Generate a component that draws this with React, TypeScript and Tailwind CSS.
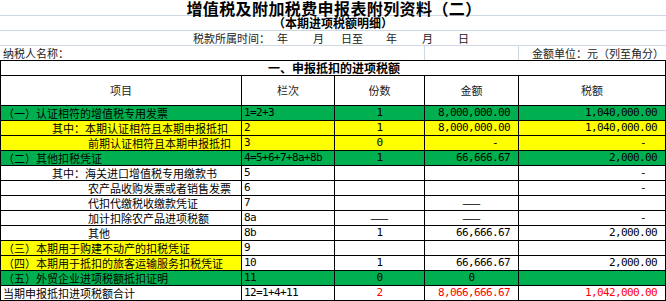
import React from "react";

type Bg = "g" | "y" | "";
type R = {
  label: string;
  indent: 0 | 1 | 2;
  col: string;
  fen?: string;
  amt?: string;
  tax?: string;
  bg: Bg;
  bgAll: boolean;
  red?: boolean;
};

const rows: R[] = [
  { label: "（一）认证相符的增值税专用发票", indent: 0, col: "1=2+3", fen: "1", amt: "8,000,000.00", tax: "1,040,000.00", bg: "g", bgAll: true },
  { label: "其中：本期认证相符且本期申报抵扣", indent: 1, col: "2", fen: "1", amt: "8,000,000.00", tax: "1,040,000.00", bg: "y", bgAll: true },
  { label: "前期认证相符且本期申报抵扣", indent: 2, col: "3", fen: "0", amt: "-", tax: "-", bg: "y", bgAll: true },
  { label: "（二）其他扣税凭证", indent: 0, col: "4=5+6+7+8a+8b", fen: "1", amt: "66,666.67", tax: "2,000.00", bg: "g", bgAll: true },
  { label: "其中：海关进口增值税专用缴款书", indent: 1, col: "5", tax: "-", bg: "", bgAll: false },
  { label: "农产品收购发票或者销售发票", indent: 2, col: "6", tax: "-", bg: "", bgAll: false },
  { label: "代扣代缴税收缴款凭证", indent: 2, col: "7", amt: "——", bg: "", bgAll: false },
  { label: "加计扣除农产品进项税额", indent: 2, col: "8a", fen: "——", amt: "——", tax: "-", bg: "", bgAll: false },
  { label: "其他", indent: 2, col: "8b", fen: "1", amt: "66,666.67", tax: "2,000.00", bg: "", bgAll: false },
  { label: "（三）本期用于购建不动产的扣税凭证", indent: 0, col: "9", bg: "y", bgAll: false },
  { label: "（四）本期用于抵扣的旅客运输服务扣税凭证", indent: 0, col: "10", fen: "1", amt: "66,666.67", tax: "2,000.00", bg: "y", bgAll: false },
  { label: "（五）外贸企业进项税额抵扣证明", indent: 0, col: "11", fen: "0", amt: "0", bg: "g", bgAll: true },
  { label: "当期申报抵扣进项税额合计", indent: 0, col: "12=1+4+11", fen: "2", amt: "8,066,666.67", tax: "1,042,000.00", bg: "", bgAll: false, red: true },
];

const bgCls = (b: Bg) => (b === "g" ? "bg-[#00b050]" : b === "y" ? "bg-[#ffff00]" : "bg-white");
const indentCls = ["pl-[2px]", "pl-[51px]", "pl-[87px]"];
const CJK = "font-['Noto_Sans_CJK_SC',sans-serif]";
const MONO = "font-['DejaVu_Sans_Mono',monospace] text-[11px] leading-[14px] tracking-[-0.62px]";

function NumCell({ v, red, kind }: { v?: string; red?: boolean; kind: "amt" | "tax" | "fen" }) {
  if (!v) return null;
  const color = red ? "text-[#ff0000]" : "text-black";
  if (v === "——") {
    return <div className={`${CJK} text-[11px] leading-[14px] text-center text-black`}>——</div>;
  }
  if (kind === "fen" || v === "0") {
    return <div className={`${MONO} text-center ${color}`}>{v}</div>;
  }
  if (v === "-") {
    return <div className={`${MONO} text-right ${kind === "amt" ? "pr-[20px]" : "pr-[19px]"} ${color}`}>-</div>;
  }
  return <div className={`${MONO} text-right pr-[8px] ${color}`}>{v}</div>;
}

function DataRow({ r, last }: { r: R; last: boolean }) {
  const first = bgCls(r.bg);
  const rest = r.bgAll ? bgCls(r.bg) : "bg-white";
  return (
    <div className={`flex border-t border-black ${last ? "h-[16px] border-b" : "h-[15px]"}`}>
      <div className={`w-[241px] shrink-0 border-l border-black ${first} ${indentCls[r.indent]} ${CJK} text-[11px] leading-[14px] text-black whitespace-nowrap overflow-hidden`}>
        {r.label}
      </div>
      <div className={`w-[93px] shrink-0 border-l border-black ${rest} pl-[2px] ${MONO} text-black whitespace-nowrap`}>
        {r.col}
      </div>
      <div className={`w-[90px] shrink-0 border-l border-black ${rest}`}>
        <NumCell v={r.fen} red={r.red} kind="fen" />
      </div>
      <div className={`w-[94px] shrink-0 border-l border-black ${rest}`}>
        <NumCell v={r.amt} red={r.red} kind="amt" />
      </div>
      <div className={`w-[148px] shrink-0 border-l border-r border-black ${rest}`}>
        <NumCell v={r.tax} red={r.red} kind="tax" />
      </div>
    </div>
  );
}

export default function App() {
  return (
    <div className={`w-[666px] h-[301px] bg-white overflow-hidden ${CJK} text-black`}>
      {/* title */}
      <div className="h-[15px] flex justify-center items-start">
        <div className="text-[16px] font-bold leading-[15px] tracking-[0.4px] whitespace-nowrap pl-[2px] pt-[1px]">
          增值税及附加税费申报表附列资料（二）
        </div>
      </div>
      <div className="h-[15px] border-t border-[#d0d7e5] flex justify-center">
        <div className="text-[12px] font-bold leading-[14px] whitespace-nowrap">（本期进项税额明细）</div>
      </div>
      <div className="h-[15px] border-t border-[#d0d7e5] flex text-[11px] leading-[14px] whitespace-nowrap text-[#222]">
        <span className="ml-[193px]">税款所属时间：</span>
        <span className="ml-[7px]">年</span>
        <span className="ml-[25px]">月</span>
        <span className="ml-[17px]">日至</span>
        <span className="ml-[23px]">年</span>
        <span className="ml-[25px]">月</span>
        <span className="ml-[25px]">日</span>
      </div>
      <div className="h-[15px] border-t border-[#d0d7e5] flex text-[11px] leading-[14px] whitespace-nowrap text-[#222]">
        <div className="w-[424px] pl-[3px]">纳税人名称：</div>
        <div className="w-[94px] border-l border-[#d0d7e5]"></div>
        <div className="flex-1 border-l border-[#d0d7e5] text-right pr-[2px]">金额单位：元（列至角分）</div>
      </div>
      {/* section */}
      <div className="h-[15px] border-t border-l border-r border-black flex justify-center">
        <div className="text-[12px] font-bold leading-[14px] whitespace-nowrap pl-[2px]">一、申报抵扣的进项税额</div>
      </div>
      {/* header */}
      <div className="flex h-[30px] border-t border-black text-[11px] text-[#222] leading-[29px] text-center">
        <div className="w-[241px] shrink-0 border-l border-black">项目</div>
        <div className="w-[93px] shrink-0 border-l border-black">栏次</div>
        <div className="w-[90px] shrink-0 border-l border-black">份数</div>
        <div className="w-[94px] shrink-0 border-l border-black">金额</div>
        <div className="w-[148px] shrink-0 border-l border-r border-black">税额</div>
      </div>
      {rows.map((r, i) => (
        <DataRow key={i} r={r} last={i === rows.length - 1} />
      ))}
    </div>
  );
}
